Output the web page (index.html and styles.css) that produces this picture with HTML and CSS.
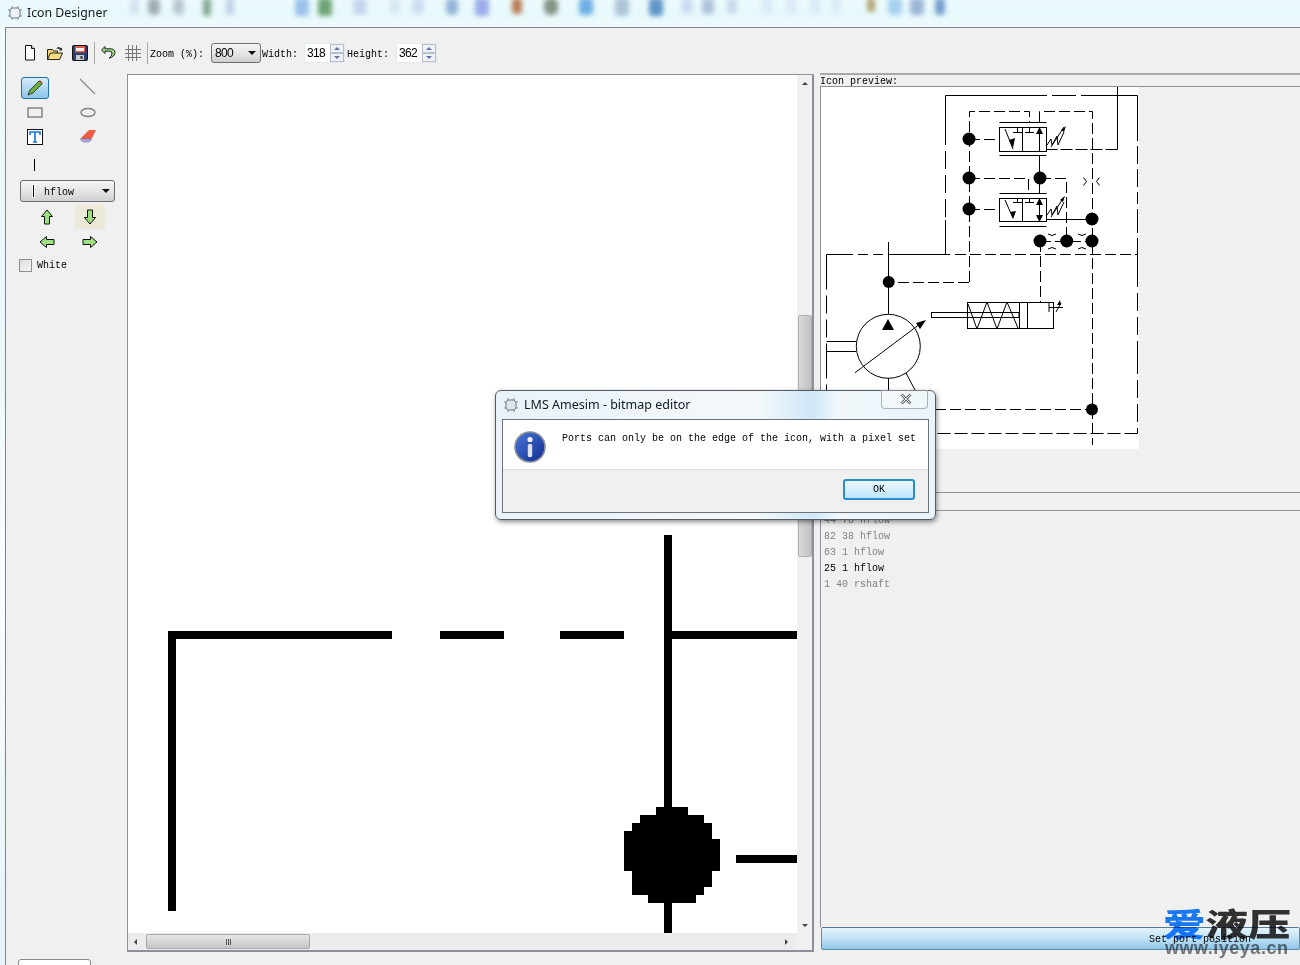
FILE: index.html
```html
<!DOCTYPE html>
<html lang="en">
<head>
<meta charset="utf-8">
<title>Icon Designer</title>
<link rel="stylesheet" href="styles.css">
</head>
<body>
<div class="screen">
  <header class="titlebar">
    <svg class="desk-blur" viewBox="0 0 1300 27" width="1300" height="27" aria-hidden="true">
      <defs><filter id="b" x="-50%" y="-50%" width="200%" height="200%"><feGaussianBlur stdDeviation="2.800"/></filter></defs>
      <g filter="url(#b)">
        <rect x="130" y="-2" width="9" height="17" rx="4" fill="#d4e2ee"/>
        <rect x="148" y="-2" width="12" height="17" rx="5" fill="#a0acb4"/>
        <rect x="173" y="-2" width="11" height="17" rx="5" fill="#b8c6d2"/>
        <rect x="203" y="-2" width="8" height="18" rx="3" fill="#84a690"/>
        <rect x="226" y="-2" width="8" height="17" rx="3" fill="#c0d0e8"/>
        <rect x="295" y="-2" width="14" height="18" rx="3" fill="#9cc2ec"/>
        <rect x="318" y="-2" width="14" height="18" rx="3" fill="#6ea476"/>
        <rect x="353" y="-2" width="14" height="17" rx="6" fill="#c4d6ee"/>
        <rect x="390" y="-2" width="10" height="16" rx="4" fill="#d8e7f5"/>
        <rect x="412" y="-2" width="12" height="16" rx="5" fill="#cbdcf0"/>
        <rect x="446" y="-2" width="12" height="17" rx="5" fill="#94b4d8"/>
        <rect x="475" y="-2" width="14" height="18" rx="3" fill="#9cacea"/>
        <rect x="512" y="-2" width="10" height="16" rx="4" fill="#b87e54"/>
        <rect x="544" y="-2" width="14" height="17" rx="6" fill="#849384"/>
        <rect x="579" y="-2" width="14" height="17" rx="4" fill="#6caee4"/>
        <rect x="615" y="-2" width="14" height="18" rx="3" fill="#acc5d8"/>
        <rect x="649" y="-2" width="14" height="18" rx="3" fill="#5f96c8"/>
        <rect x="681" y="-2" width="12" height="16" rx="5" fill="#cbdcf2"/>
        <rect x="702" y="-2" width="12" height="16" rx="4" fill="#acc2da"/>
        <rect x="727" y="-2" width="10" height="16" rx="4" fill="#c9daec"/>
        <rect x="761" y="-2" width="12" height="16" rx="4" fill="#dcebf8"/>
        <rect x="785" y="-2" width="12" height="16" rx="4" fill="#dcebf8"/>
        <rect x="809" y="-2" width="12" height="16" rx="4" fill="#dcebf8"/>
        <rect x="831" y="-2" width="10" height="16" rx="4" fill="#dcebf8"/>
        <rect x="867" y="-2" width="8" height="14" rx="3" fill="#b0a670"/>
        <rect x="888" y="-2" width="14" height="17" rx="4" fill="#a6d0f0"/>
        <rect x="910" y="-2" width="14" height="17" rx="4" fill="#9cb6d8"/>
        <rect x="935" y="-2" width="10" height="17" rx="4" fill="#749ece"/>
      </g>
    </svg>
    <svg class="app-icon" viewBox="0 0 16 16" width="16" height="16" aria-hidden="true">
      <path d="M5 3h6l2 2v6l-2 2H5l-2-2V5z" fill="#eef3f7" stroke="#6d7780"/>
      <path d="M5 1v2M11 1v2M5 13v2M11 13v2M1 5h2M1 11h2M13 5h2M13 11h2" stroke="#7d8790"/>
    </svg>
    <span class="title-text">Icon Designer</span>
  </header>

  <main class="window">
    <div class="toolbar">
      <button class="tb-btn" aria-label="New">
        <svg viewBox="0 0 16 16" width="16" height="16"><path d="M3.500 .5h6l3 3v11.500h-9z" fill="#fff" stroke="#111"/><path d="M9.500 .5v3h3" fill="#dde6f2" stroke="#111"/></svg>
      </button>
      <button class="tb-btn" aria-label="Open">
        <svg viewBox="0 0 18 16" width="18" height="16"><path d="M1.500 14.500v-10h5l1 1.500h4v2" fill="#f6d77a" stroke="#222"/><path d="M1.500 14.500l3-6.500h12l-3 6.500z" fill="#f9dd82" stroke="#222"/><path d="M10 3.500q3-3 5 0l1-1v3h-3l1-1q-2-1.500-4-1" fill="#222"/></svg>
      </button>
      <button class="tb-btn" aria-label="Save">
        <svg viewBox="0 0 16 16" width="16" height="16"><rect x=".5" y=".5" width="15" height="15" rx="1" fill="#2b3f70" stroke="#111"/><rect x="3" y="1" width="10" height="6.500" fill="#e45a4a"/><rect x="4" y="3" width="8" height="3" fill="#f3f3f3"/><rect x="4" y="10" width="8" height="5" fill="#c9c9c9"/><rect x="8.500" y="11" width="2" height="3" fill="#333"/></svg>
      </button>
      <span class="tb-sep"></span>
      <button class="tb-btn tb-undo" aria-label="Undo">
        <svg viewBox="0 0 16 16" width="16" height="16"><path d="M5 1.500L1.500 5 5 8.500V6.200h4.500q2.500 0 2.500 2.600 0 2.200-3 4.400 6-1.500 6-5.900C15 4.500 12.500 3.800 10 3.800H5z" fill="#9fd48a" stroke="#1d2a1d"/></svg>
      </button>
      <button class="tb-btn tb-grid" aria-label="Grid">
        <svg viewBox="0 0 16 16" width="16" height="16"><path d="M0 4.500h16M0 8.500h16M0 12.500h16M3.500 0v16M7.500 0v16M11.500 0v16" stroke="#777" fill="none"/></svg>
      </button>
      <span class="tb-sep tb-sep-2"></span>
      <label class="lbl lbl-zoom">Zoom (%):</label>
      <div class="combo combo-zoom"><span class="combo-val">800</span><span class="caret"></span></div>
      <label class="lbl lbl-w">Width:</label>
      <div class="spin"><span class="spin-val">318</span><span class="spin-btns"><i class="up"></i><i class="down"></i></span></div>
      <label class="lbl lbl-h">Height:</label>
      <div class="spin"><span class="spin-val">362</span><span class="spin-btns"><i class="up"></i><i class="down"></i></span></div>
    </div>

    <div class="workspace">
      <aside class="tools">
        <div class="tool-grid">
          <button class="tool active" aria-label="Pencil">
            <svg viewBox="0 0 18 18" width="18" height="18"><path d="M2 16l2-5L13 2l3 3-9 9z" fill="#6fae3c" stroke="#222" stroke-width=".8"/><path d="M13 2l3 3 1-1-3-3z" fill="#d0503c"/></svg>
          </button>
          <button class="tool" aria-label="Line">
            <svg viewBox="0 0 18 18" width="18" height="18"><path d="M1 1l15 15" stroke="#888" stroke-width="1.300"/></svg>
          </button>
          <button class="tool tool-s" aria-label="Rectangle">
            <svg viewBox="0 0 16 12" width="16" height="12"><rect x="1" y="1" width="14" height="9" fill="#f0f0f0" stroke="#7f7f7f" stroke-width="1.400"/></svg>
          </button>
          <button class="tool tool-s" aria-label="Ellipse">
            <svg viewBox="0 0 16 12" width="16" height="12"><ellipse cx="8" cy="5.500" rx="7" ry="4" fill="#f0f0f0" stroke="#7f7f7f" stroke-width="1.400"/></svg>
          </button>
          <button class="tool tool-t" aria-label="Text">
            <svg viewBox="0 0 16 16" width="16" height="16"><rect x=".5" y=".5" width="15" height="15" fill="#fff" stroke="#111"/><path d="M3 6V3h10v3M8 3v10M6 13h4" stroke="#1577e0" stroke-width="1.600" fill="none"/></svg>
          </button>
          <button class="tool tool-t" aria-label="Eraser">
            <svg viewBox="0 0 18 16" width="18" height="16"><path d="M2 9l8-8h7l-4 8-3 3H4z" fill="#ef5a43"/><path d="M1 10l3 3h6l3-3H5z" fill="#a9a8e4" stroke="#6a69a8" stroke-width=".5"/></svg>
          </button>
        </div>
        <div class="stroke-mark"></div>
        <div class="combo combo-port"><span class="mini-bar"></span><span class="lbl">hflow</span><span class="caret"></span></div>
        <div class="arrow-grid">
          <button class="arrow" aria-label="Up"><svg viewBox="0 0 14 16" width="14" height="16"><path d="M7 1l5.500 6.500H9.500V15h-5V7.500H1.500z" fill="#9de07f" stroke="#111"/></svg></button>
          <button class="arrow arrow-on" aria-label="Down"><svg viewBox="0 0 14 16" width="14" height="16"><path d="M7 15l5.500-6.500H9.500V1h-5v7.500H1.500z" fill="#9de07f" stroke="#111"/></svg></button>
          <button class="arrow" aria-label="Left"><svg viewBox="0 0 16 14" width="16" height="14"><path d="M1 7l6.500-5.500V4.500H15v5H7.500v3z" fill="#9de07f" stroke="#111"/></svg></button>
          <button class="arrow" aria-label="Right"><svg viewBox="0 0 16 14" width="16" height="14"><path d="M15 7L8.500 1.500V4.500H1v5h7.500v3z" fill="#9de07f" stroke="#111"/></svg></button>
        </div>
        <label class="check-row"><span class="check"></span><span class="lbl">White</span></label>
      </aside>

      <section class="canvas-frame">
        <div class="canvas-row">
          <div class="canvas">
            <svg viewBox="128 75 669 858" width="669" height="858" shape-rendering="crispEdges" aria-label="Zoomed icon">
              <g fill="#000">
                <rect x="168" y="631" width="224" height="8"/>
                <rect x="440" y="631" width="64" height="8"/>
                <rect x="560" y="631" width="64" height="8"/>
                <rect x="664" y="631" width="133" height="8"/>
                <rect x="168" y="631" width="8" height="280"/>
                <rect x="664" y="535" width="8" height="398"/>
                <rect x="736" y="855" width="61" height="8"/>
                <path d="M656 807h32v8h16v8h8v16h8v32h-8v16h-8v8h-8v8h-48v-8h-16v-24h-8v-40h8v-8h8v-8h16z"/>
              </g>
            </svg>
          </div>
          <div class="vscroll">
            <span class="tri tri-up"></span>
            <div class="vtrack"><span class="vthumb"></span></div>
            <span class="tri tri-down"></span>
          </div>
        </div>
        <div class="hscroll">
          <span class="tri tri-left"></span>
          <span class="hthumb"><span class="grip"></span></span>
          <span class="tri tri-right"></span>
          <span class="corner"></span>
        </div>
      </section>

      <section class="side">
        <div class="side-label lbl">Icon preview:</div>
        <div class="preview-row">
          <div class="preview">
            <svg viewBox="821 87 318 362" width="318" height="362" fill="none" stroke="#000" stroke-width="1" aria-label="Icon preview">
              <path d="M945.500 254V95.500H1035" stroke-dasharray="34 3 18 6 18 6 18 6 200"/>
              <path d="M1035 95.500H1137.500V254" stroke-dasharray="12 5 24 5 102 5 18 5 18 5"/>
              <path d="M826.500 254.500H853M858 254.500H868M873 254.500H883M888 254.500H950"/>
              <path d="M955 254.500H1137.500" stroke-dasharray="11 4"/>
              <path d="M826.500 254.500V450" stroke-dasharray="35 6 18 6 18 6"/>
              <path d="M1137.500 254V433.500" stroke-dasharray="33 6 18 6 18 6"/>
              <path d="M1137.500 433.500H826.500" stroke-dasharray="13 4"/>
              <path d="M1117.500 87V149.500"/>
              <path d="M1117.500 149.500H1047" stroke-dasharray="12 3"/>
              <g stroke-dasharray="11 4">
                <path d="M969.500 282V111.500H1029.500V122"/>
                <path d="M1039.500 122V111.500H1092.500V445"/>
                <path d="M969 282.500H897"/>
                <path d="M969 139.500H999"/>
                <path d="M969 209.500H999"/>
                <path d="M969 178.500H1028.500V193"/>
                <path d="M1040 178.500H1066.500V241"/>
                <path d="M1040.500 241V302"/>
                <path d="M935 409.500H1092"/>
                <path d="M1040 241.500H1092"/>
              </g>
              <path d="M1039.500 155V193"/>
              <path d="M1046.500 219.500H1092"/>
              <path d="M888.500 242V314"/>
              <path d="M888.500 378V400"/>
              <path d="M906 373l9 17"/>
              <path d="M999.500 122.500H1046.500M999.500 155.500H1046.500M999.500 193.500H1046.500M999.500 226.500H1046.500"/>
              <rect x="999.500" y="127.500" width="47" height="24"/>
              <rect x="999.500" y="198.500" width="47" height="23"/>
              <path d="M1022.500 127.500v24M1022.500 198.500v23"/>
              <path d="M1005 129l8 20M1005 200l8 18"/>
              <path d="M1017.500 128v4M1013 132.500h9M1029.500 128v4M1025 132.500h9M1017.500 198v4M1013 202.500h9M1029.500 198v4M1025 202.500h9"/>
              <path d="M1039.500 130V151M1039.500 201V221"/>
              <path d="M1047 145l4-6 1 6 5-9 1 9 6-13M1047 215l4-6 1 6 5-9 1 9 6-13"/>
              <path d="M1051 147l13-20M1051 217l13-20"/>
              <path d="M1083.500 177.500l3 4-3 4M1099.500 177.500l-3 4 3 4"/>
              <path d="M1048 234q4 3 8 0M1048 249q4-3 8 0M1078 234q4 3 8 0M1078 249q4-3 8 0"/>
              <circle cx="888.300" cy="346.300" r="32"/>
              <path d="M855 372.700l68-51"/>
              <path d="M826.500 341.500H856M826.500 351.500H856"/>
              <rect x="931.500" y="312.500" width="87.500" height="5"/>
              <rect x="967.500" y="302.500" width="86" height="26"/>
              <path d="M1019.500 302.500v26M1027.500 302.500v26"/>
              <path d="M968 304l9 25 10-27 10 27 10-27 11 26"/>
              <path d="M1049 303v9M1049 307.500h14M1056 312l5-9"/>
              <g fill="#000" stroke="none">
                <circle cx="969" cy="139" r="6.500"/>
                <circle cx="969" cy="178" r="6.500"/>
                <circle cx="969" cy="209" r="6.500"/>
                <circle cx="1040" cy="178" r="6.500"/>
                <circle cx="1092" cy="219" r="6.500"/>
                <circle cx="1040" cy="241" r="6.500"/>
                <circle cx="1066.700" cy="241" r="6.500"/>
                <circle cx="1092" cy="241" r="6.500"/>
                <circle cx="888.700" cy="282" r="6"/>
                <circle cx="1092" cy="409.500" r="6"/>
                <path d="M882 330h12l-6-11z"/>
                <path d="M926 320l-10 3 4 6z"/>
                <path d="M1013 148l-4-8 6-2z"/>
                <path d="M1013 219l-3-7 6-1z"/>
                <path d="M1039.500 127l-3.500 7h7z"/>
                <path d="M1039.500 198l-3.500 7h7zM1039.500 222l-3.500-7h7z"/>
                <path d="M1066 126l-5 4 3 2z"/>
                <path d="M1065 196l-5 4 3 2z"/>
                <path d="M1060 300l-3 5h4z"/>
              </g>
            </svg>
          </div>
          <div class="preview-rest"></div>
        </div>
        <div class="side-gap"></div>
        <div class="rule"></div>
        <div class="ports">
          <div class="port lbl">44 78 hflow</div>
          <div class="port lbl">82 38 hflow</div>
          <div class="port lbl">63 1 hflow</div>
          <div class="port port-on lbl">25 1 hflow</div>
          <div class="port lbl">1 40 rshaft</div>
        </div>
        <button class="port-btn"><span class="lbl">Set port position</span></button>
      </section>
    </div>
    <div class="footer"><span class="stub"></span></div>
  </main>

  <div class="dialog" role="dialog">
    <div class="dlg-title">
      <svg class="app-icon" viewBox="0 0 16 16" width="16" height="16" aria-hidden="true">
        <path d="M5 3h6l2 2v6l-2 2H5l-2-2V5z" fill="#dbe6ef" stroke="#6d7780"/>
        <path d="M5 1v2M11 1v2M5 13v2M11 13v2M1 5h2M1 11h2M13 5h2M13 11h2" stroke="#7d8790"/>
      </svg>
      <span class="dlg-title-text">LMS Amesim - bitmap editor</span>
      <span class="dlg-close">
        <svg viewBox="0 0 14 12" width="14" height="12"><path d="M2.500 1.500l9 9M11.500 1.500l-9 9" stroke="#6f6f78" stroke-width="2.800"/><path d="M2.500 1.500l9 9M11.500 1.500l-9 9" stroke="#e6e6ea" stroke-width="1"/></svg>
      </span>
    </div>
    <div class="dlg-inner">
      <div class="dlg-msg">
        <svg class="info" viewBox="0 0 32 32" width="32" height="32" aria-hidden="true">
          <defs><linearGradient id="ig" x1="0" y1="0" x2="1" y2="1"><stop offset="0" stop-color="#4a79d8"/><stop offset="1" stop-color="#0f2a90"/></linearGradient></defs>
          <circle cx="16" cy="16" r="15" fill="url(#ig)" stroke="#8a8f98" stroke-width="1.600"/>
          <circle cx="16" cy="8.500" r="2.600" fill="#f2f4f8"/>
          <rect x="13.800" y="13" width="4.400" height="13" rx="1.500" fill="#dfe2e8"/>
        </svg>
        <span class="lbl">Ports can only be on the edge of the icon, with a pixel set</span>
      </div>
      <div class="dlg-actions"><button class="ok lbl">OK</button></div>
    </div>
  </div>

  <div class="watermark">
    <div class="wm-cn"><span class="wm-ai">爱</span><span>液压</span></div>
    <div class="wm-url">www.iyeya.cn</div>
  </div>
</div>
</body>
</html>
```
FILE: styles.css
```css
* { box-sizing: border-box; }
html, body { margin: 0; padding: 0; }
body { width: 1300px; height: 965px; overflow: hidden; background: #fff; font-family: "Liberation Mono", monospace; }
button { padding: 0; margin: 0; border: 0; background: none; font: inherit; color: inherit; }
svg { display: block; }

.screen { position: relative; width: 1300px; height: 965px; overflow: hidden; padding-left: 5px; background: linear-gradient(180deg, #f2fbfd 0, #e9f6fb 30%, #f8fcfe 60%, #e6f3fa 100%); }
.titlebar { position: relative; height: 27px; margin-left: -5px; padding: 5px 0 0 7px; display: flex; align-items: flex-start; gap: 4px; background: linear-gradient(180deg, #ecfafd, #e6f9fc 50%, #eefafb); }
.desk-blur { position: absolute; left: 0; top: 0; }
.app-icon { position: relative; flex: none; }
.title-text { position: relative; font: 12.300px/16px "Noto Sans", "Open Sans", sans-serif; color: #1a1a1a; }

.window { height: 938px; background: #f0f0f0; border: 1px solid #7f858f; border-right: 0; border-bottom: 0; display: flex; flex-direction: column; }

.lbl { font: 10px/12px "Liberation Mono", monospace; color: #000; white-space: pre; }

.toolbar { height: 46px; display: flex; align-items: center; padding: 3px 0 0 11px; flex: none; }
.toolbar .lbl { padding-top: 4px; }
.tb-btn { width: 25px; height: 24px; display: flex; align-items: center; justify-content: center; flex: none; }
.tb-sep { width: 1px; height: 22px; margin: 0 1px 0 2px; background: #a9a9a9; flex: none; }
.tb-undo { width: 24px; }
.tb-grid { width: 26px; }
.tb-sep-2 { margin: 0 2px 0 1px; }
.lbl-zoom { width: 61px; }
.lbl-w { width: 42px; }
.lbl-h { width: 49px; }
.combo { display: flex; align-items: center; border: 1px solid #707070; border-radius: 3px; background: linear-gradient(180deg, #f4f4f4, #e6e6e6 50%, #cfcfcf); position: relative; flex: none; }
.combo-zoom { width: 50px; height: 20px; padding-left: 3px; margin-right: 1px; }
.combo-zoom .combo-val { font: 12px/18px "Liberation Sans", sans-serif; letter-spacing: -.7px; }
.caret { position: absolute; right: 4px; top: 50%; margin-top: -2px; border: 4px solid transparent; border-top-color: #111; border-bottom: 0; }
.spin { width: 41px; height: 20px; display: flex; align-items: center; background: #fff; border: 1px solid #e3e9ef; flex: none; margin-right: 2px; }
.spin-val { flex: 1; padding-left: 2px; font: 12px/18px "Liberation Sans", sans-serif; letter-spacing: -.7px; }
.spin-btns { width: 14px; height: 18px; display: flex; flex-direction: column; flex: none; }
.spin-btns i { flex: 1; display: flex; align-items: center; justify-content: center; background: #eef1f6; border: 1px solid #b7bfcc; }
.spin-btns i::after { content: ""; border: 3px solid transparent; }
.spin-btns .up::after { border-bottom-color: #6470a8; border-top: 0; }
.spin-btns .down::after { border-top-color: #6470a8; border-bottom: 0; }

.workspace { flex: none; height: 878px; display: flex; align-items: flex-start; }

.tools { width: 121px; flex: none; padding: 1px 0 0 14px; }
.tool-grid { display: grid; grid-template-columns: 28px 28px; column-gap: 25px; margin-left: 1px; }
.tool { height: 24px; display: flex; align-items: center; justify-content: center; }
.tool.active { height: 22px; margin-top: 2px; border: 1px solid #1d6fa5; border-radius: 3px; background: linear-gradient(180deg, #d6ecf9, #8cc4e8); }
.tool-s { height: 26px; padding-top: 2px; }
.tool-t { height: 24px; }
.stroke-mark { width: 1px; height: 12px; margin: 10px 0 0 14px; background: #000; }
.combo-port { width: 95px; height: 22px; margin-top: 9px; padding-left: 12px; }
.combo-port .lbl { padding-top: 4px; }
.mini-bar { width: 1px; height: 12px; background: #000; margin-right: 10px; outline: 1px solid #fff; }
.arrow-grid { display: grid; grid-template-columns: 30px 30px; column-gap: 13px; margin: 3px 0 0 12px; grid-auto-rows: 25px; }
.arrow { display: flex; align-items: center; justify-content: center; padding-bottom: 2px; }
.arrow-on { background: #ece9d8; height: 24px; padding-bottom: 0; }
.check-row { display: flex; align-items: center; gap: 5px; margin: 3px 0 0 -1px; }
.check-row .lbl { padding-top: 2px; }
.check { width: 13px; height: 13px; background: linear-gradient(135deg, #dcdcdc, #f6f6f6); border: 1px solid #8e8f8f; }

.canvas-frame { width: 687px; height: 878px; border: 1px solid #8f8f9b; border-right-width: 2px; border-bottom-width: 2px; display: flex; flex-direction: column; flex: none; }
.canvas-row { display: flex; height: 858px; flex: none; }
.canvas { width: 669px; height: 858px; background: #fff; overflow: hidden; flex: none; }
.vscroll { width: 15px; flex: 1; background: #f0f0f0; display: flex; flex-direction: column; align-items: center; padding: 7px 0 6px; }
.vtrack { flex: 1; width: 100%; padding-top: 230px; }
.vthumb { display: block; width: 14px; margin-left: 1px; height: 242px; background: linear-gradient(90deg, #d9d9d9, #c2c2c2); border: 1px solid #b0b0b0; border-radius: 2px; }
.tri { width: 0; height: 0; border: 3.500px solid transparent; flex: none; }
.tri-up { border-bottom-color: #444; border-top: 0; }
.tri-down { border-top-color: #444; border-bottom: 0; }
.tri-left { border-right-color: #444; border-left: 0; margin: 0 9px 0 6px; }
.tri-right { border-left-color: #444; border-right: 0; margin-left: auto; margin-right: 8px; }
.hscroll { flex: 1; display: flex; align-items: center; background: #ececec; }
.hthumb { width: 164px; height: 15px; display: flex; align-items: center; justify-content: center; background: linear-gradient(180deg, #e6e6e6, #c6c6c6); border: 1px solid #a9a9a9; border-radius: 2px; }
.grip { width: 5px; height: 6px; background: repeating-linear-gradient(90deg, #555 0, #555 1px, transparent 1px, transparent 2px); }
.corner { width: 16px; height: 100%; background: #f0f0f0; flex: none; }

.side { flex: 1; min-width: 0; height: 878px; margin-left: 6px; margin-top: -1px; display: flex; flex-direction: column; position: relative; border-top: 2px solid #a8a8a8; }
.side-label { height: 11px; line-height: 14px; padding-left: 0; flex: none; }
.preview-row { flex: none; display: flex; height: 362px; border-left: 1px solid #8f8f9b; border-top: 1px solid #8f8f9b; box-sizing: content-box; }
.preview { width: 318px; height: 362px; background: #fff; flex: none; }
.preview-rest { flex: 1; }
.side-gap { flex: none; height: 44px; border-bottom: 1px solid #8f8f9b; }
.rule { flex: none; height: 18px; border-bottom: 1px solid #8f8f9b; border-left: 1px solid #8f8f9b; }
.ports { flex: 1; border-left: 1px solid #8f8f9b; padding: 2px 0 0 3px; min-height: 0; overflow: hidden; }
.port { height: 16px; line-height: 16px; color: #808080; }
.port-on { color: #000; }
.port-btn { flex: none; height: 23px; width: calc(100% - 1px); margin: 0 0 1px 1px; display: flex; align-items: center; padding: 2px 0 0 327px; background: linear-gradient(180deg, #e4f3fb, #c4e4f6 45%, #8fc4e6); border: 1px solid #5f8fb0; border-top-color: #55779a; border-radius: 2px; }

.footer { flex: 1; padding: 7px 0 0 12px; min-height: 0; overflow: hidden; }
.stub { display: block; width: 73px; height: 20px; border: 1px solid #8a8a8a; border-radius: 3px; background: #fff; }

.dialog { position: absolute; left: 495px; top: 390px; width: 441px; height: 130px; border: 1px solid #555b63; border-radius: 6px; background: linear-gradient(90deg, #eaf2f8 0, #f3f8fb 60%, #cfe7f8 72%, #f1f7fb 78%, #e9f3fa 100%); box-shadow: 1px 2px 5px rgba(0,0,0,.45); padding: 0 6px 6px; display: flex; flex-direction: column; }
.dlg-title { height: 28px; display: flex; align-items: center; gap: 5px; padding-left: 1px; position: relative; flex: none; }
.dlg-title-text { font: 12.500px/16px "Noto Sans", "Open Sans", sans-serif; color: #101820; }
.dlg-close { position: absolute; right: 1px; top: -1px; width: 47px; height: 19px; padding-left: 3px; display: flex; align-items: center; justify-content: center; border: 1px solid #a8b2bc; border-top: 0; border-radius: 0 0 4px 4px; background: rgba(255,255,255,.25); }
.dlg-inner { flex: 1; border: 1px solid #6d7278; background: #f0f0f0; display: flex; flex-direction: column; }
.dlg-msg { height: 50px; background: #fff; display: flex; align-items: flex-start; padding: 11px 0 0 11px; gap: 16px; border-bottom: 1px solid #dfdfdf; flex: none; }
.dlg-msg .lbl { margin-top: 2px; }
.dlg-actions { flex: 1; display: flex; justify-content: flex-end; padding: 9px 13px 0 0; }
.ok { width: 72px; height: 21px; border: 2px solid #2a8fc8; border-radius: 3px; background: linear-gradient(180deg, #eaf6fd, #d7effc 50%, #bde6fd); text-align: center; }

.watermark { position: absolute; left: 1163px; top: 905px; width: 137px; pointer-events: none; mix-blend-mode: multiply; }
.wm-cn { font: 900 32px/34px "Noto Sans CJK SC", sans-serif; color: #333; white-space: nowrap; display: flex; transform: scaleX(1.33); transform-origin: left center; filter: blur(.3px); }
.wm-ai { color: #1a7fff; }
.wm-url { font: 700 18px/18px "Liberation Sans", sans-serif; color: rgba(80,80,80,.75); padding-left: 2px; letter-spacing: .5px; filter: blur(.4px); }
```
